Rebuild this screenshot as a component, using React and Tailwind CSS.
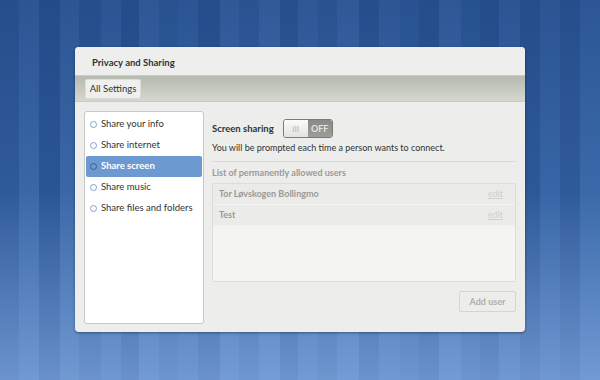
import { useState } from 'react';

const stripes = [
  { w: 19, c: 'bg-[#2f5a9a]' }, { w: 20, c: 'bg-[#3a67a7]' }, { w: 21, c: 'bg-[#2a5595]' },
  { w: 19, c: 'bg-[#3a67a6]' }, { w: 22, c: 'bg-[#2e5999]' }, { w: 20, c: 'bg-[#3765a5]' },
  { w: 18, c: 'bg-[#2b5696]' }, { w: 21, c: 'bg-[#3c6aaa]' }, { w: 19, c: 'bg-[#31609f]' },
  { w: 20, c: 'bg-[#3766a6]' }, { w: 22, c: 'bg-[#2d5898]' }, { w: 19, c: 'bg-[#3e6cac]' },
  { w: 20, c: 'bg-[#3462a2]' }, { w: 21, c: 'bg-[#416faf]' }, { w: 18, c: 'bg-[#2f5b9b]' },
  { w: 20, c: 'bg-[#3c6aaa]' }, { w: 19, c: 'bg-[#33619f]' }, { w: 22, c: 'bg-[#3f6dad]' },
  { w: 20, c: 'bg-[#2e5a9a]' }, { w: 21, c: 'bg-[#3a68a8]' }, { w: 19, c: 'bg-[#3261a1]' },
  { w: 20, c: 'bg-[#2c5797]' }, { w: 22, c: 'bg-[#3d6bab]' }, { w: 20, c: 'bg-[#30609f]' },
  { w: 19, c: 'bg-[#2b5696]' }, { w: 21, c: 'bg-[#3866a6]' }, { w: 20, c: 'bg-[#2d5898]' },
  { w: 20, c: 'bg-[#3765a5]' }, { w: 20, c: 'bg-[#2f5a9a]' }, { w: 20, c: 'bg-[#3a69a9]' },
];

const items = ['Share your info', 'Share internet', 'Share screen', 'Share music', 'Share files and folders'];
const users = ['Tor Løvskogen Bollingmo', 'Test'];

function Wallpaper() {
  return (
    <div className="absolute inset-0 flex">
      {stripes.map((s, i) => (
        <div key={i} className={`h-full ${s.c}`} style={{ width: s.w }} />
      ))}
      <div className="absolute inset-0 bg-gradient-to-b from-[#1c3f7c]/45 via-transparent to-[#a8ccff]/50" />
    </div>
  );
}

export default function App() {
  const [selected, setSelected] = useState(2);

  return (
    <div className="relative w-[600px] h-[380px] overflow-hidden font-['Lato',sans-serif]">
      <Wallpaper />
      <div className="relative pt-[47px] pl-[75px]">
        <div className="w-[450px] h-[285px] bg-[#ededeb] rounded-[4px] shadow-[0_1px_3px_rgba(0,0,0,0.4)] flex flex-col overflow-hidden">
          {/* Title */}
          <div className="h-[28px] flex items-center pl-[17px] pt-[4px] text-[9.5px] font-bold text-[#2e3436] bg-[#eeeeec]">
            Privacy and Sharing
          </div>
          {/* Toolbar */}
          <div className="h-[27px] bg-gradient-to-b from-[#b5bbb0] to-[#d4d7ce] border-t border-[#c9ccc4] border-b border-[#b3b6ae] flex items-center px-[10px]">
            <button className="h-[20px] w-[56px] bg-[#efefed] rounded-[2px] border border-[#dcdcd8] text-[9.5px] text-[#2e3436] leading-none">
              All Settings
            </button>
          </div>
          {/* Body */}
          <div className="flex-1 flex px-[9px] pt-[9px] pb-[8px] gap-[8px]">
            <div className="w-[120px] bg-white border border-[#c9c9c5] rounded-[3px] py-[2px] px-[1px]">
              {items.map((it, i) => (
                <div
                  key={it}
                  onClick={() => setSelected(i)}
                  className={`h-[21px] flex items-center gap-[4px] pl-[4px] text-[9.5px] whitespace-nowrap rounded-[2px] ${
                    i === selected ? 'bg-[#6c99cf] text-white font-bold' : 'text-[#2e3436]'
                  }`}
                >
                  <span className={`w-[7px] h-[7px] rounded-full border ${i === selected ? 'border-[#3e5f8a]' : 'border-[#7ea3d1]'}`} />
                  {it}
                </div>
              ))}
            </div>
            <div className="flex-1 flex flex-col">
              <div className="flex items-center gap-[9px] pt-[8px]">
                <span className="text-[9.5px] font-bold text-[#2e3436] leading-[12px]">Screen sharing</span>
                <div className="w-[50px] h-[19px] rounded-[3px] border border-[#7b7b78] flex overflow-hidden">
                  <div className="w-[24px] bg-gradient-to-b from-[#fbfbfa] to-[#e3e3e0] flex items-center justify-center text-[8px] text-[#b4b4b0]">III</div>
                  <div className="flex-1 bg-gradient-to-b from-[#8a8a87] to-[#9c9c99] flex items-center justify-center text-[9px] font-bold text-[#e3e3e0]">OFF</div>
                </div>
              </div>
              <div className="text-[9px] leading-[12px] text-[#2e3436] mt-[4px]">You will be prompted each time a person wants to connect.</div>
              <div className="border-t border-[#dadad6] mt-[7px]" />
              <div className="text-[9px] leading-[12px] font-bold text-[#9a9a97] mt-[5px]">List of permanently allowed users</div>
              <div className="h-[99px] mt-[4px] bg-[#f4f4f3] border border-[#dcdcd9] rounded-[2px]">
                {users.map((u) => (
                  <div key={u} className="h-[21px] bg-[#ebebea] border-b border-[#f4f4f3] flex items-center justify-between pl-[6px] pr-[12px] text-[9px]">
                    <span className="font-bold text-[#9a9a98]">{u}</span>
                    <span className="text-[#d0d0ce] underline">edit</span>
                  </div>
                ))}
              </div>
              <div className="flex justify-end mt-[9px]">
                <button className="w-[57px] h-[21px] rounded-[2px] border border-[#d5d5d2] bg-[#ededeb] text-[9px] font-bold text-[#adadaa]">
                  Add user
                </button>
              </div>
            </div>
          </div>
        </div>
      </div>
    </div>
  );
}
